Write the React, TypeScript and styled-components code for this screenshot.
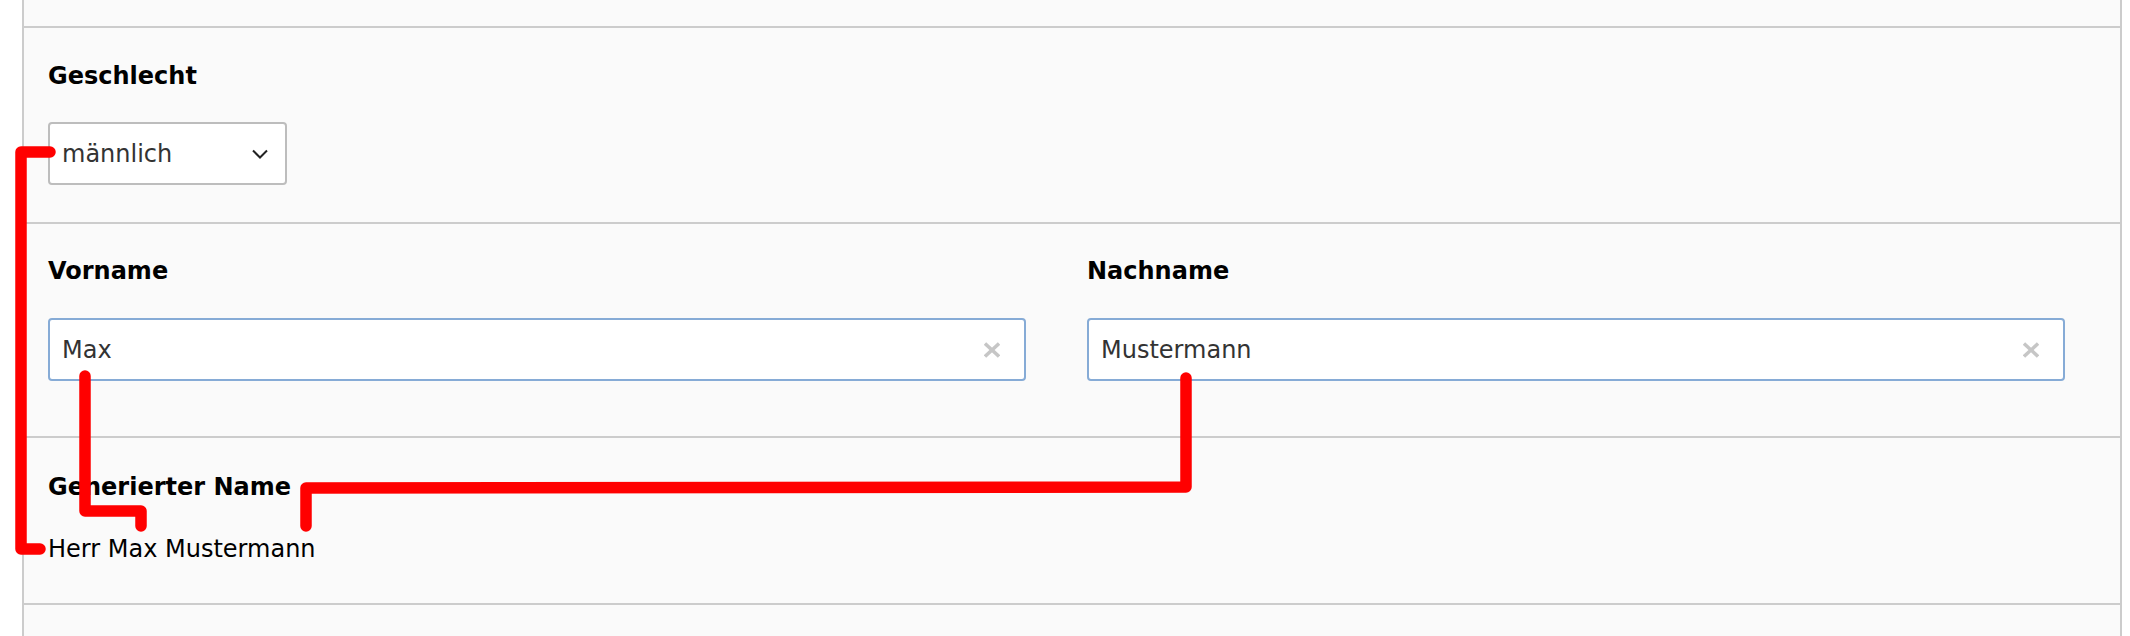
import React from "react";
import styled, { createGlobalStyle } from "styled-components";

const GlobalStyle = createGlobalStyle`
  html, body {
    margin: 0;
    padding: 0;
    background: #ffffff;
    overflow: hidden;
  }
  body {
    font-family: "DejaVu Sans", Verdana, sans-serif;
    color: #000;
  }
  * { box-sizing: border-box; }
`;

const Page = styled.div`
  position: relative;
  width: 2130px;
  height: 636px;
`;

const Panel = styled.div`
  margin-left: 22px;
  width: 2100px;
  min-height: 636px;
  background: #fafafa;
  border-left: 2px solid #cccccc;
  border-right: 2px solid #cccccc;
`;

const Section = styled.div<{ $top?: number; $bottom?: number; $height?: number }>`
  padding: ${(p) => p.$top ?? 0}px 55px ${(p) => p.$bottom ?? 0}px 24px;
  border-bottom: 2px solid #cccccc;
  ${(p) => (p.$height !== undefined ? `height: ${p.$height}px;` : "")}
`;

const LastSection = styled.div`
  min-height: 40px;
`;

const Columns = styled.div`
  display: grid;
  grid-template-columns: 1fr 1fr;
  column-gap: 61px;
`;

const Field = styled.div<{ $gap: number }>`
  display: flex;
  flex-direction: column;
  align-items: flex-start;
  gap: ${(p) => p.$gap}px;
`;

const Label = styled.label`
  font-family: "DejaVu Sans", Verdana, sans-serif;
  font-weight: bold;
  font-size: 24px;
  line-height: 30px;
  color: #000;
`;

const SelectBox = styled.div`
  width: 239px;
  height: 63px;
  display: flex;
  align-items: center;
  justify-content: space-between;
  padding: 1px 17px 0 12px;
  background: #ffffff;
  border: 2px solid #bdbdbd;
  border-radius: 4px;
  font-size: 24px;
  color: #333333;
`;

const InputBox = styled.div`
  align-self: stretch;
  height: 63px;
  display: flex;
  align-items: center;
  padding: 1px 24px 0 12px;
  background: #ffffff;
  border: 2px solid #86abd6;
  border-radius: 4px;
`;

const TextInput = styled.input`
  flex: 1;
  min-width: 0;
  border: none;
  outline: none;
  background: transparent;
  padding: 0;
  margin: 0;
  font-family: "DejaVu Sans", Verdana, sans-serif;
  font-size: 24px;
  color: #333333;
`;

const ClearButton = styled.span`
  display: flex;
  align-items: center;
  justify-content: center;
  width: 16px;
  height: 16px;
`;

const Output = styled.div`
  font-size: 24px;
  line-height: 30px;
  color: #000;
`;

const Overlay = styled.svg`
  position: absolute;
  top: 0;
  left: 0;
  pointer-events: none;
`;

const Chevron = () => (
  <svg width="16" height="10" viewBox="0 0 16 10">
    <polyline points="1,1.5 8,8.5 15,1.5" fill="none" stroke="#222" strokeWidth="2" />
  </svg>
);

const ClearIcon = () => (
  <svg width="16" height="16" viewBox="0 0 16 16">
    <g stroke="#c6c6c6" strokeWidth="3.4" strokeLinecap="butt">
      <line x1="1" y1="1.5" x2="15" y2="14.5" />
      <line x1="15" y1="1.5" x2="1" y2="14.5" />
    </g>
  </svg>
);

const TextField = ({ label, value }: { label: string; value: string }) => (
  <Field $gap={32}>
    <Label>{label}</Label>
    <InputBox>
      <TextInput type="text" value={value} readOnly />
      <ClearButton>
        <ClearIcon />
      </ClearButton>
    </InputBox>
  </Field>
);

export default function App() {
  return (
    <>
      <GlobalStyle />
      <Page>
        <Panel>
          <Section $height={28} />
          <Section $top={33} $bottom={37}>
            <Field $gap={31}>
              <Label>Geschlecht</Label>
              <SelectBox>
                <span>männlich</span>
                <Chevron />
              </SelectBox>
            </Field>
          </Section>
          <Section $top={32} $bottom={55}>
            <Columns>
              <TextField label="Vorname" value="Max" />
              <TextField label="Nachname" value="Mustermann" />
            </Columns>
          </Section>
          <Section $top={34} $bottom={39}>
            <Field $gap={32}>
              <Label>Generierter Name</Label>
              <Output>Herr Max Mustermann</Output>
            </Field>
          </Section>
          <LastSection />
        </Panel>
        <Overlay width="2130" height="636" viewBox="0 0 2130 636">
          <g fill="none" stroke="#ff0000" strokeWidth="11.5" strokeLinecap="round" strokeLinejoin="round">
            <polyline points="50,152 21,152 21,549 40,549" />
            <polyline points="85,376 85,511 141,511 141,526" />
            <polyline points="1186,378 1186,487 306,488 306,526" />
          </g>
        </Overlay>
      </Page>
    </>
  );
}
